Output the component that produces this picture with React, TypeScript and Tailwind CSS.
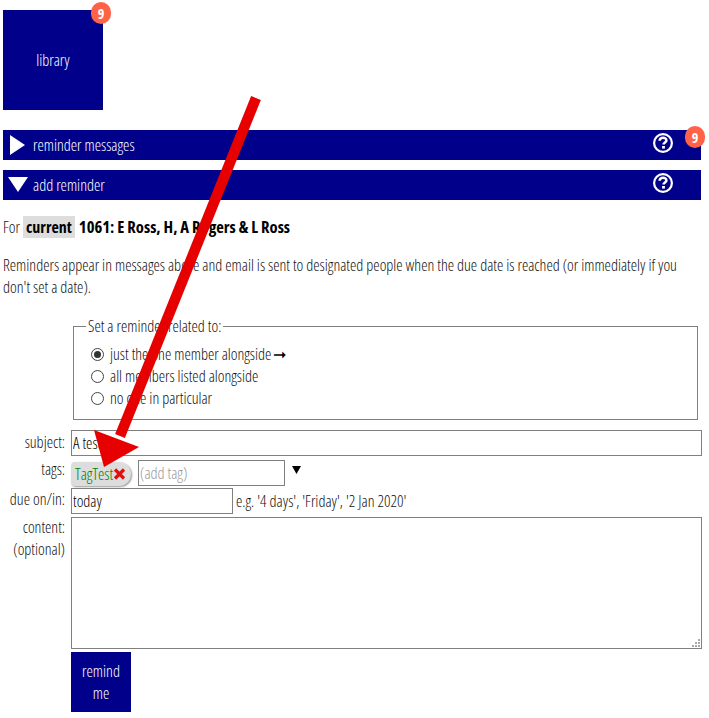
import React from "react";

const font = { fontFamily: '"Open Sans", "Liberation Sans", sans-serif', fontStretch: "75%", fontWeight: 300 };

function Help() {
  return (
    <svg width="20" height="20" viewBox="0 0 20 20" fill="none">
      <circle cx="10" cy="10" r="8.9" stroke="white" strokeWidth="2.2" />
      <path d="M6.6 7.8C6.6 5.8 8.2 4.8 10 4.8s3.4.9 3.4 2.7c0 2-2.8 2-2.8 4" stroke="white" strokeWidth="2.6" fill="none" />
      <rect x="9.1" y="13" width="2.8" height="2.6" fill="white" />
    </svg>
  );
}

function Badge({ className }: { className: string }) {
  return (
    <span className={"absolute flex h-[22px] w-[20px] items-center justify-center rounded-full bg-[#ff6347] text-[14px] font-bold text-white " + className}>
      9
    </span>
  );
}

function Bar({ open, label, badge }: { open: boolean; label: string; badge?: boolean }) {
  return (
    <div className="relative flex h-[30px] items-center bg-[#00008b] text-white">
      <span className="flex w-[30px] justify-center">
        {open ? (
          <svg width="20" height="15" viewBox="0 0 20 15" className="mb-[1px]"><path d="M0 0H20L10 15Z" fill="white" /></svg>
        ) : (
          <svg width="15" height="20" viewBox="0 0 15 20" className="mr-[2px]"><path d="M0 0L15 10L0 20Z" fill="white" /></svg>
        )}
      </span>
      <span className="text-[16px]">{label}</span>
      <span className="absolute right-[28px] top-[3px]"><Help /></span>
      {badge && <Badge className="right-[-4px] top-[-4px]" />}
    </div>
  );
}

function Radio({ checked, label }: { checked?: boolean; label: React.ReactNode }) {
  return (
    <label className="flex h-[22px] items-center">
      <span className="mr-[6px] flex h-[13px] w-[13px] items-center justify-center rounded-full border border-[#444]">
        {checked && <span className="h-[7px] w-[7px] rounded-full bg-[#333]" />}
      </span>
      <span>{label}</span>
    </label>
  );
}

const inputCls = "h-[26px] border border-[#808080] bg-white pl-px text-[16px] text-black outline-none";

export default function App() {
  return (
    <div className="relative h-[718px] w-[709px] overflow-hidden bg-white px-[3px] pt-[10px] text-[16px] text-[#111]" style={font}>
      <div className="relative flex h-[100px] w-[100px] items-center justify-center bg-[#00008b] text-white">
        library
        <Badge className="right-[-8px] top-[-8px]" />
      </div>

      <div className="mt-[20px] mr-[5px] flex flex-col gap-[10px]">
        <Bar open={false} label="reminder messages" badge />
        <Bar open label="add reminder" />
      </div>

      <p className="mt-[16px] flex h-[22px] items-center font-bold text-black">
        <span className="font-light text-[#111]">For</span>
        <span className="ml-[3px] bg-[#ddd] px-[3px] leading-[22px]">current</span>
        <span className="ml-[4px] text-[16.6px]">1061: E Ross, H, A Rogers &amp; L Ross</span>
      </p>

      <p className="mt-[16px] w-[690px] leading-[22px]">
        Reminders appear in messages above and email is sent to designated people when the due date is reached (or immediately if you don't set a date).
      </p>

      <fieldset className="mt-[17px] ml-[70px] mr-[8px] h-[105px] border border-[#808080] pl-[17px]">
        <legend className="ml-[-5px] px-[2px] leading-[22px]">Set a reminder related to:</legend>
        <div className="mt-[6px]">
          <Radio checked label={<span className="flex items-center gap-[2px]">just the one member alongside <span className="font-normal text-black">➞</span></span>} />
          <Radio label="all members listed alongside" />
          <Radio label="no one in particular" />
        </div>
      </fieldset>

      <div className="mt-[10px] grid grid-cols-[68px_1fr] pr-[4px]">
        <label className="pr-[6px] text-right leading-[24px]">subject:</label>
        <input className={inputCls + " w-full"} defaultValue="A test" />

        <label className="mt-[1px] pr-[6px] text-right leading-[24px]">tags:</label>
        <div className="mt-[4px] flex items-start">
          <span className="mt-[2px] flex h-[24px] w-[60px] items-center rounded-r-[12px] rounded-l-[4px] bg-[#ddd] pl-[4px] text-[#008000] shadow-[1px_1px_2px_#999]">
            TagTest
            <svg width="13" height="12" viewBox="0 0 13 12" className="shrink-0"><path d="M2 1.5L11 10.5M11 1.5L2 10.5" stroke="#e01010" strokeWidth="3.2" /></svg>
          </span>
          <input className={inputCls + " ml-[7px] w-[147px] placeholder:text-[#999]"} placeholder="(add tag)" />
          <svg width="9" height="8" viewBox="0 0 9 8" className="ml-[7px] mt-[6px]"><path d="M0 0H9L4.5 8Z" fill="black" /></svg>
        </div>

        <label className="mt-[1px] pr-[6px] text-right leading-[24px]">due on/in:</label>
        <div className="mt-[2px] flex items-center">
          <input className={inputCls + " w-[162px]"} defaultValue="today" />
          <span className="ml-[3px]">e.g. '4 days', 'Friday', '2 Jan 2020'</span>
        </div>

        <label className="mt-[2px] pr-[6px] text-right leading-[22px]">content:<br />(optional)</label>
        <div className="relative mt-[3px] h-[132px]">
          <textarea className="block h-full w-full resize-none border border-[#808080] bg-white text-black outline-none" />
          <svg width="9" height="9" viewBox="0 0 9 9" className="absolute bottom-[2px] right-[2px]" fill="#aaa">
            <rect x="7" y="1" width="2" height="2" /><rect x="4" y="4" width="2" height="2" /><rect x="7" y="4" width="2" height="2" />
            <rect x="1" y="7" width="2" height="2" /><rect x="4" y="7" width="2" height="2" /><rect x="7" y="7" width="2" height="2" />
          </svg>
        </div>

        <div />
        <button className="mt-[3px] h-[60px] w-[60px] bg-[#00008b] leading-[22px] text-white">remind<br />me</button>
      </div>

      <svg className="pointer-events-none absolute left-0 top-0" width="709" height="718" viewBox="0 0 709 718">
        <path d="M256 98L120 436" stroke="#e60000" strokeWidth="10.5" />
        <path d="M94 430L139 447L104 467Z" fill="#e60000" />
      </svg>
    </div>
  );
}
